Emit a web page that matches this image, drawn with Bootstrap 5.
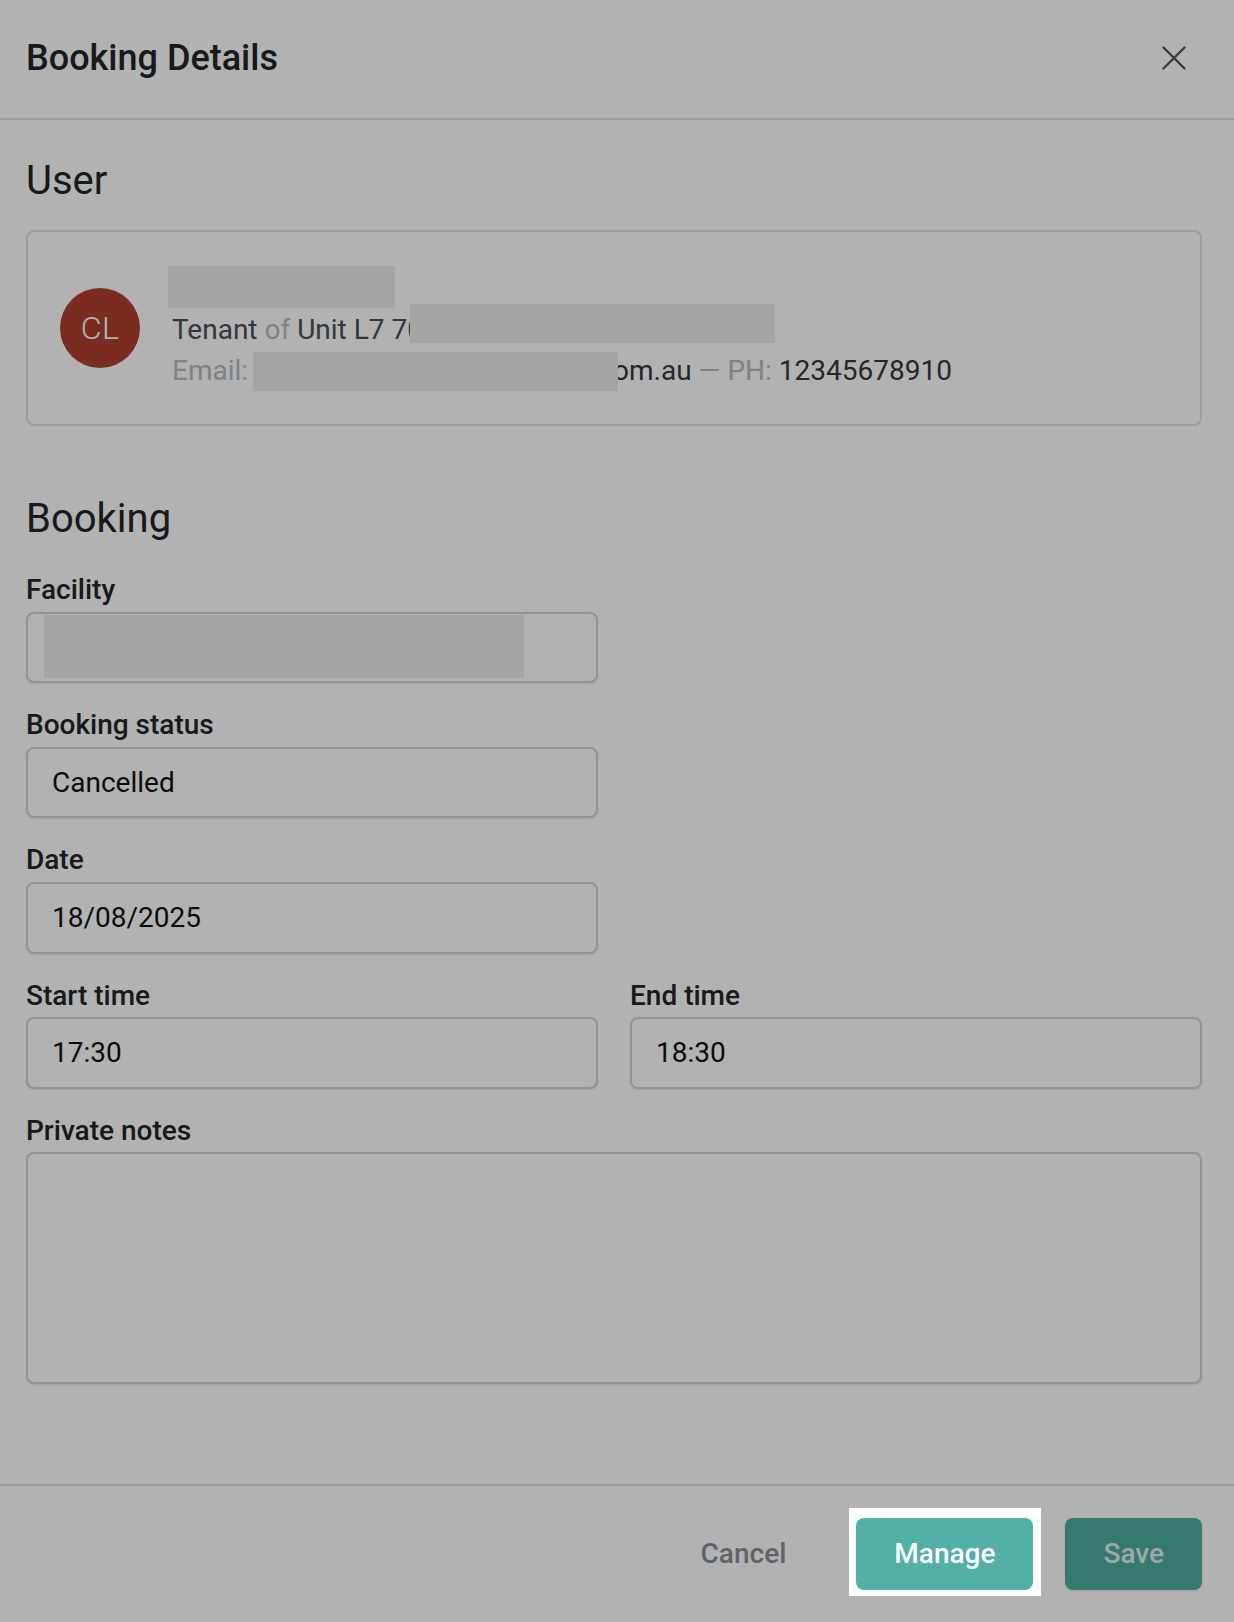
<!DOCTYPE html>
<html lang="en">
<head>
<meta charset="utf-8">
<title>Booking Details</title>
<link href="https://cdn.jsdelivr.net/npm/bootstrap@5.3.0/dist/css/bootstrap.min.css" rel="stylesheet">
<style>
html,body{height:100%}
body{font-family:Roboto,"Liberation Sans",sans-serif;font-size:28px;line-height:42px;color:#212529;background:#fff}
.dim-layer{position:fixed;inset:0;background:rgba(0,0,0,.3);z-index:10}
.sheet{height:1622px;border:0;border-radius:0;background:#fff}
.sheet-head{height:120px;padding:0 48px 3px 26px;border-bottom:2px solid #dfe0ea}
.sheet-title{font-size:36px;font-weight:500;line-height:48px;margin:0}
.close-x{width:24px;height:24px;padding:0;border:0;background:none;line-height:0}
.sheet-body{padding:37px 32px 0 26px}
.sec-title{font-size:40px;font-weight:400;line-height:48px;margin:0 0 25px}
.user-box{height:196px;padding:0 32px;gap:32px;border:2px solid #dfe0ea;border-radius:8px;margin-bottom:69px}
.book-title{margin-bottom:26px}
.avatar-disc{width:80px;height:80px;border-radius:50%;background:#b14030;color:#fff;font-size:32px;font-weight:300;letter-spacing:.5px;flex:none}
.user-lines{position:relative;white-space:nowrap;color:#343a40;padding-top:2px}
.text-line{height:42px}
.name-line{height:43px}
.unit-line{height:41px}
.faint{color:#b3bac2}
.mid{color:#495057}
.redact{background:#ececec}
.redact-name{display:block;position:absolute;left:-4px;top:2px;width:227px;height:42px}
.redact-inline{display:inline-block;height:39px;vertical-align:top;position:relative}
.redact-unit{width:365px;top:-5px;margin-left:-13px}
.redact-mail{width:365px;margin-left:-2px;margin-right:-5px;top:2px}
.field-lab{font-weight:500;font-size:28px;line-height:42px;margin:0 0 .5px;display:block;color:#212529}
.field-box{height:71.7px;font-size:28px;line-height:42px;padding:0 24px;border:2px solid #ced4da;border-radius:8px;color:#111;box-shadow:0 1px 2px rgba(0,0,0,.1);background:#fff}
.field-gap{margin-bottom:21px}
.note-box{height:232px;resize:none}
.half-row{--bs-gutter-x:32px;--bs-gutter-y:0}
.redact-fac{position:absolute;left:18px;top:3px;width:480px;height:63px}
.sheet-foot{padding:32px;border-top:2px solid #dfe0ea;gap:32px}
.foot-btn{height:72px;padding:0 38px;font-size:28px;font-weight:500;border-radius:8px;border:0;line-height:72px;color:#fff;background:#52b0a5}
.foot-btn:hover{color:#fff;background:#52b0a5}
.foot-plain{background:none;color:#868e96}
.foot-plain:hover{background:none;color:#868e96}
.foot-save,.foot-save:hover{color:rgba(255,255,255,.85);background:#4caea0;box-shadow:0 1px 3px rgba(0,0,0,.1)}
.spot{position:relative;z-index:20;background:#fff;padding:10px 8px 6px 7px;margin:-10px -8px -6px -7px}
</style>
</head>
<body>
<div class="modal-content sheet d-flex flex-column">
  <div class="sheet-head d-flex align-items-center justify-content-between">
    <h5 class="sheet-title">Booking Details</h5>
    <button type="button" class="close-x" aria-label="Close">
      <svg width="24" height="24" viewBox="0 0 24 24" fill="none" stroke="#50555c" stroke-width="2.4" stroke-linecap="round"><path d="M1.5 1.5 22.5 22.5M22.5 1.5 1.5 22.5"/></svg>
    </button>
  </div>
  <div class="sheet-body flex-grow-1">
    <h4 class="sec-title">User</h4>
    <div class="user-box d-flex align-items-center">
      <div class="avatar-disc d-flex align-items-center justify-content-center">CL</div>
      <div class="user-lines">
        <div class="name-line"><span class="redact redact-name"></span></div>
        <div class="unit-line"><span class="mid">Tenant</span> <span class="faint">of</span> <span class="mid">Unit L7 70</span><span class="redact redact-inline redact-unit"></span></div>
        <div class="text-line"><span class="faint">Email:</span> <span class="redact redact-inline redact-mail"></span><span>om.au</span> <span class="faint">— PH:</span> 12345678910</div>
      </div>
    </div>
    <h4 class="sec-title book-title">Booking</h4>
    <div class="row half-row">
      <div class="col-6 field-gap">
        <label class="field-lab">Facility</label>
        <div class="position-relative"><input class="form-control field-box" type="text" readonly><span class="redact redact-fac"></span></div>
      </div>
    </div>
    <div class="row half-row">
      <div class="col-6 field-gap">
        <label class="field-lab">Booking status</label>
        <input class="form-control field-box" type="text" value="Cancelled" readonly>
      </div>
    </div>
    <div class="row half-row">
      <div class="col-6 field-gap">
        <label class="field-lab">Date</label>
        <input class="form-control field-box" type="text" value="18/08/2025" readonly>
      </div>
    </div>
    <div class="row half-row">
      <div class="col-6 field-gap">
        <label class="field-lab">Start time</label>
        <input class="form-control field-box" type="text" value="17:30" readonly>
      </div>
      <div class="col-6 field-gap">
        <label class="field-lab">End time</label>
        <input class="form-control field-box" type="text" value="18:30" readonly>
      </div>
    </div>
    <label class="field-lab">Private notes</label>
    <textarea class="form-control field-box note-box" readonly></textarea>
  </div>
  <div class="sheet-foot d-flex justify-content-end align-items-center">
    <button type="button" class="btn foot-btn foot-plain">Cancel</button>
    <div class="spot"><button type="button" class="btn foot-btn d-block">Manage</button></div>
    <button type="button" class="btn foot-btn foot-save">Save</button>
  </div>
</div>
<div class="dim-layer"></div>
</body>
</html>
